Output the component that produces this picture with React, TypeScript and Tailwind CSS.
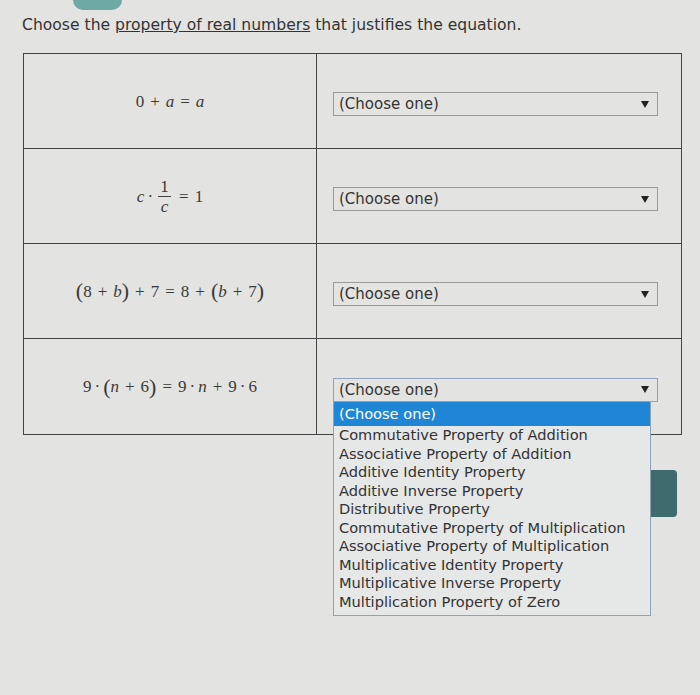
import type { ReactNode } from 'react';

const OPTIONS = [
  '(Choose one)',
  'Commutative Property of Addition',
  'Associative Property of Addition',
  'Additive Identity Property',
  'Additive Inverse Property',
  'Distributive Property',
  'Commutative Property of Multiplication',
  'Associative Property of Multiplication',
  'Multiplicative Identity Property',
  'Multiplicative Inverse Property',
  'Multiplication Property of Zero',
];

const ui = "font-['DejaVu_Sans',sans-serif]";
const math = "font-['Liberation_Serif',serif]";

function V({ children }: { children: ReactNode }) {
  return <span className="italic">{children}</span>;
}

function Op({ children }: { children: ReactNode }) {
  return <span className="mx-[6px]">{children}</span>;
}

function Dot() {
  return <span className="mx-[3px]">·</span>;
}

function Paren({ children }: { children: ReactNode }) {
  return <span className="text-[22px] leading-none">{children}</span>;
}

function Select({ open }: { open?: boolean }) {
  return (
    <div className="relative w-[325px]">
      <div
        className={`flex h-[24px] items-center justify-between border pl-[5px] pr-[8px] ${
          open ? 'border-[#8fa3b8]' : 'border-[#9a9a9a]'
        }`}
      >
        <span className={`${ui} text-[15px] text-[#333]`}>(Choose one)</span>
        <svg width="8" height="7" viewBox="0 0 8 7">
          <path d="M0 0 L8 0 L4 7 Z" fill="#222" />
        </svg>
      </div>
      {open && (
        <ul className="absolute left-0 top-full z-10 w-[318px] border border-t-0 border-[#8fa3b8] bg-[#e6e7e7] pb-[4px]">
          {OPTIONS.map((opt, i) => (
            <li
              key={opt}
              className={`${ui} flex items-center pl-[5px] text-[14.6px] ${
                i === 0 ? 'h-[24px] bg-[#1f86d6] text-white' : 'h-[18.5px] text-[#333]'
              }`}
            >
              {opt}
            </li>
          ))}
        </ul>
      )}
    </div>
  );
}

const rows: { eq: ReactNode; open?: boolean }[] = [
  {
    eq: (
      <>
        0<Op>+</Op>
        <V>a</V>
        <Op>=</Op>
        <V>a</V>
      </>
    ),
  },
  {
    eq: (
      <span className="flex items-center">
        <V>c</V>
        <Dot />
        <span className="mx-[2px] inline-flex flex-col items-center leading-[19px]">
          <span>1</span>
          <span className="h-px w-[13px] bg-[#444]" />
          <V>c</V>
        </span>
        <Op>=</Op>1
      </span>
    ),
  },
  {
    eq: (
      <>
        <Paren>(</Paren>8<Op>+</Op>
        <V>b</V>
        <Paren>)</Paren>
        <Op>+</Op>7<Op>=</Op>8<Op>+</Op>
        <Paren>(</Paren>
        <V>b</V>
        <Op>+</Op>7<Paren>)</Paren>
      </>
    ),
  },
  {
    eq: (
      <>
        9<Dot />
        <Paren>(</Paren>
        <V>n</V>
        <Op>+</Op>6<Paren>)</Paren>
        <Op>=</Op>9<Dot />
        <V>n</V>
        <Op>+</Op>9<Dot />6
      </>
    ),
    open: true,
  },
];

export default function App() {
  return (
    <div className="h-[695px] w-[700px] overflow-hidden bg-[#e3e3e1]">
      <div className="ml-[73px] h-[10px] w-[49px] rounded-b-[12px] bg-[#6fa9a3]" />
      <p className={`${ui} ml-[22px] mt-[4px] text-[15.6px] text-[#333]`}>
        Choose the <span className="underline">property of real numbers</span> that justifies
        the equation.
      </p>
      <div className="ml-[23px] mt-[16px] w-[659px] border border-[#444]">
        {rows.map((row, i) => (
          <div
            key={i}
            className={`flex h-[95px] ${i < rows.length - 1 ? 'border-b border-[#444]' : ''}`}
          >
            <div
              className={`${math} flex w-[293px] items-center justify-center border-r border-[#444] text-[17px] text-[#3a3a3a]`}
            >
              <span className="flex items-center">{row.eq}</span>
            </div>
            <div className="flex flex-1 items-center pl-[16px] pt-[6px]">
              <Select open={row.open} />
            </div>
          </div>
        ))}
      </div>
      <div className="mr-[23px] mt-[35px] flex justify-end">
        <div className="h-[47px] w-[90px] rounded-[4px] bg-[#3f6a6e]" />
      </div>
    </div>
  );
}
